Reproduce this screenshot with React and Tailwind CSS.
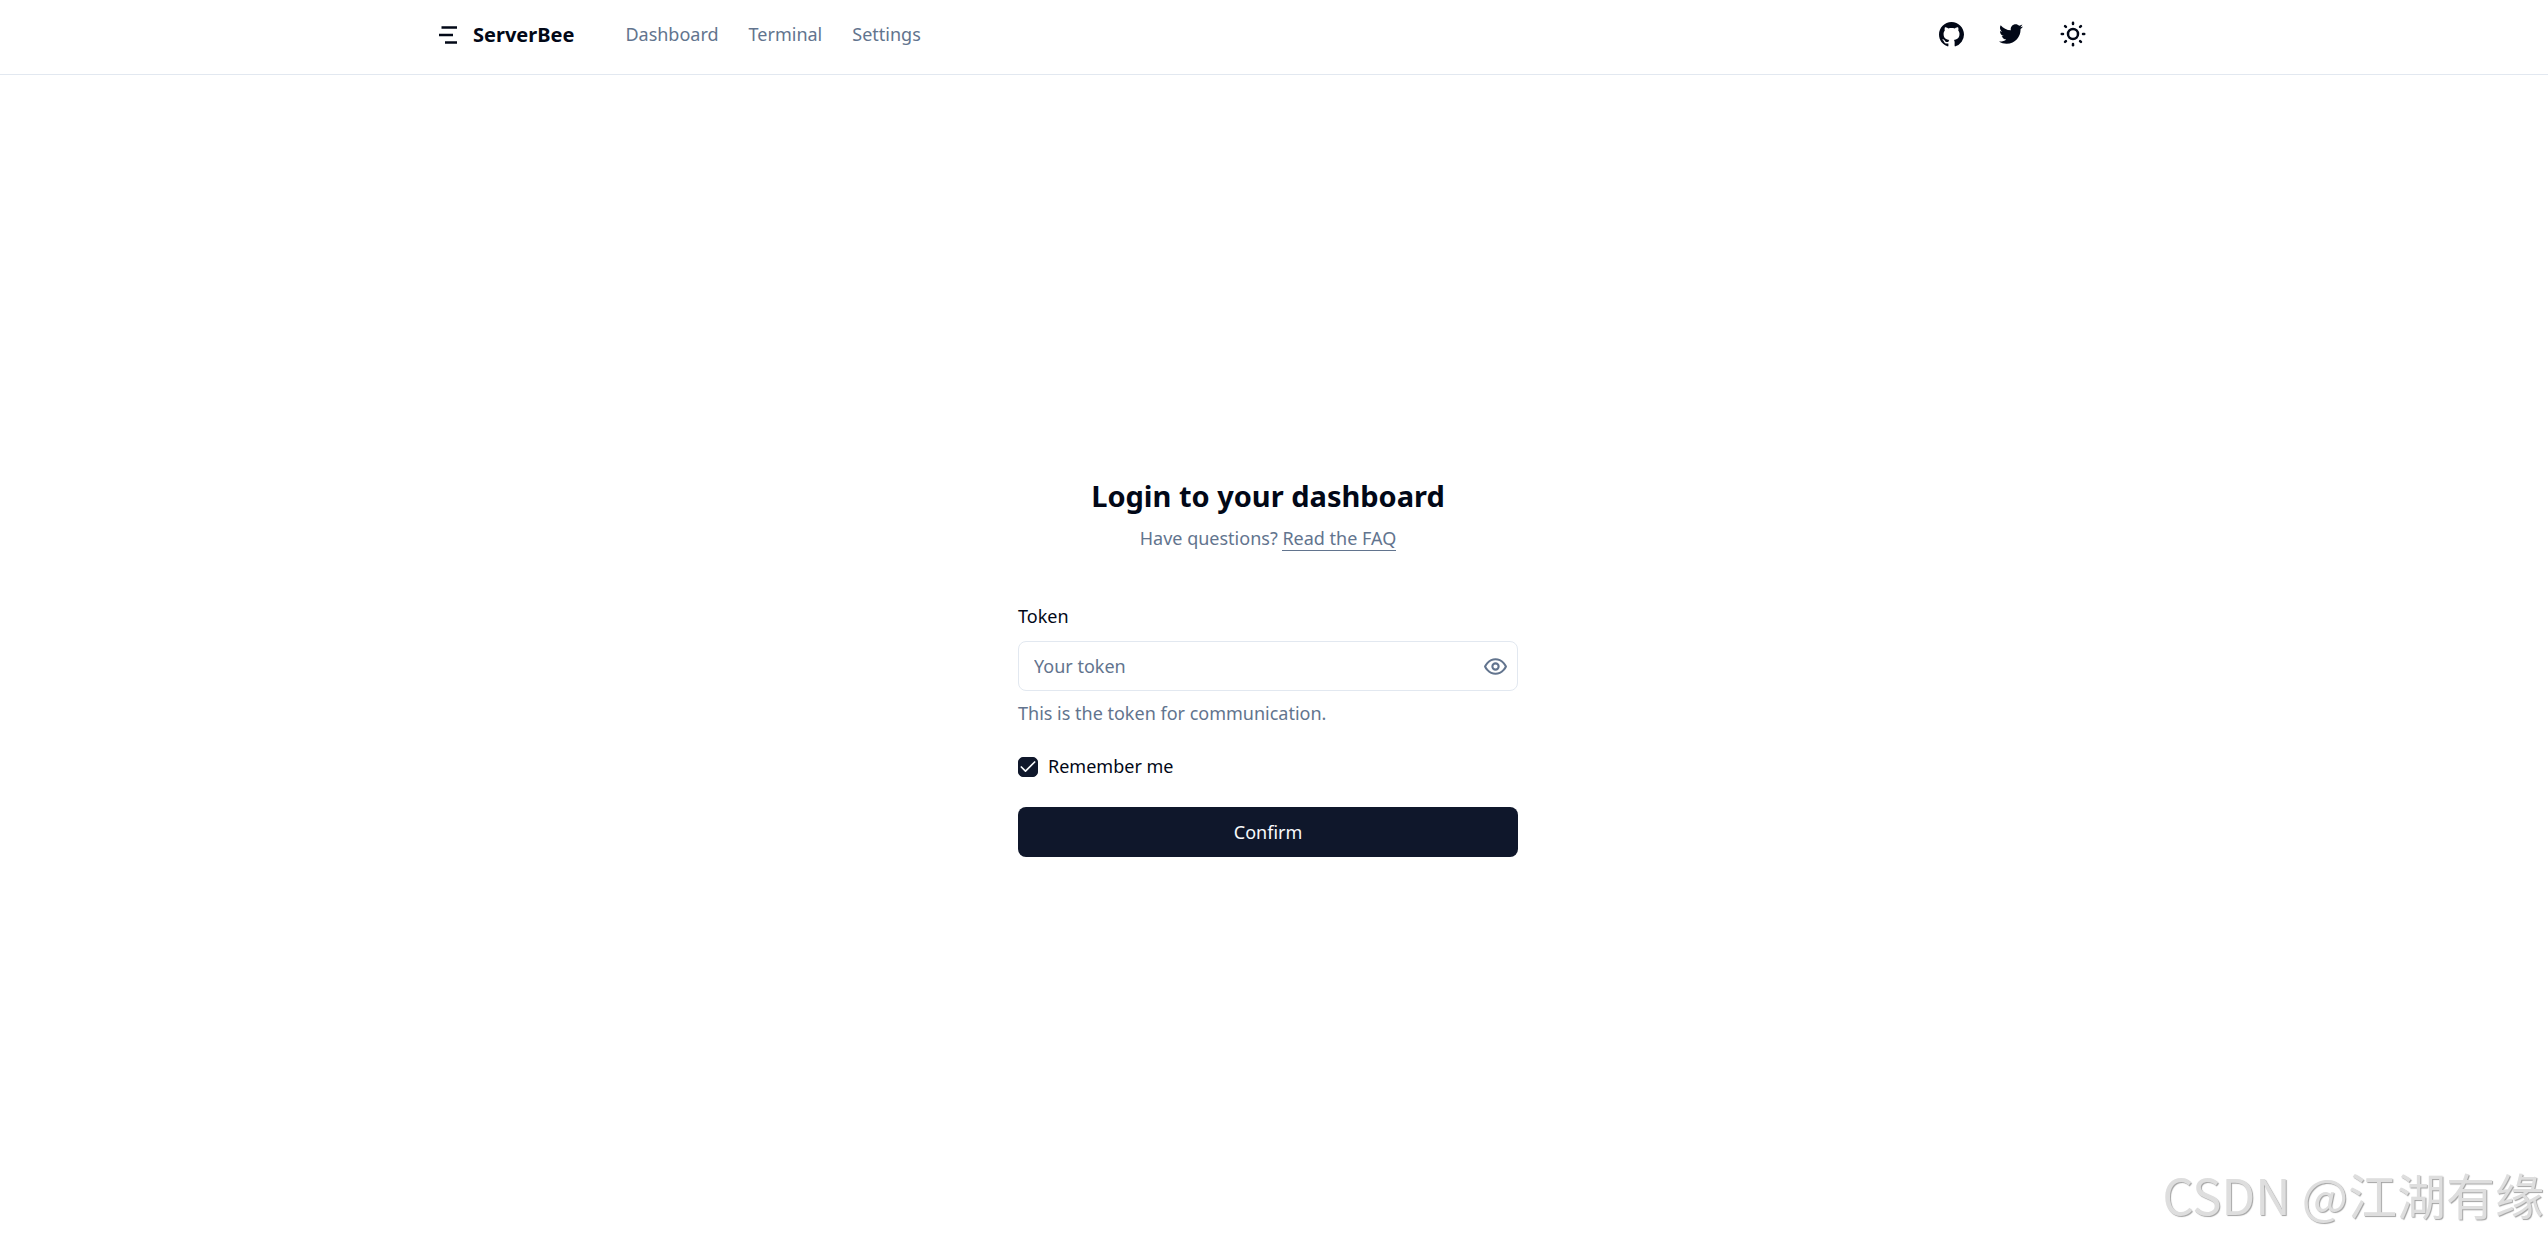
import { useState } from 'react'
import { Check, SunMedium } from 'lucide-react'
import { FaTwitter } from 'react-icons/fa'

const navItems = [
    { title: 'Dashboard', href: '#dashboard' },
    { title: 'Terminal', href: '#terminal' },
    { title: 'Settings', href: '#settings' },
]

function Logo() {
    return (
        <svg className="h-[30px] w-[30px]" viewBox="0 0 30 30" fill="none" stroke="currentColor" strokeWidth="2.5" aria-hidden="true">
            <path d="M8.5 8.5H24M6 16h14M12 23.5h12" />
        </svg>
    )
}

function GithubIcon() {
    return (
        <svg className="h-[25px] w-[25px]" viewBox="0 0 16 16" fill="currentColor" aria-hidden="true">
            <path d="M8 0C3.58 0 0 3.58 0 8c0 3.54 2.29 6.53 5.47 7.59.4.07.55-.17.55-.38 0-.19-.01-.82-.01-1.49-2.01.37-2.53-.49-2.69-.94-.09-.23-.48-.94-.82-1.13-.28-.15-.68-.52-.01-.53.63-.01 1.08.58 1.23.82.72 1.21 1.87.87 2.33.66.07-.52.28-.87.51-1.07-1.78-.2-3.64-.89-3.64-3.95 0-.87.31-1.59.82-2.15-.08-.2-.36-1.02.08-2.12 0 0 .67-.21 2.2.82.64-.18 1.32-.27 2-.27s1.36.09 2 .27c1.53-1.04 2.2-.82 2.2-.82.44 1.1.16 1.92.08 2.12.51.56.82 1.27.82 2.15 0 3.07-1.87 3.75-3.65 3.95.29.25.54.73.54 1.48 0 1.07-.01 1.93-.01 2.2 0 .21.15.46.55.38A8.01 8.01 0 0 0 16 8c0-4.42-3.58-8-8-8Z" />
        </svg>
    )
}

function EyeIcon() {
    return (
        <svg className="h-[25px] w-[25px]" viewBox="0 0 24 24" fill="none" stroke="currentColor" strokeWidth="2" strokeLinecap="round" strokeLinejoin="round" aria-hidden="true">
            <path d="M2 12s3-7 10-7 10 7 10 7-3 7-10 7-10-7-10-7Z" />
            <circle cx="12" cy="12" r="3" />
        </svg>
    )
}

function SiteHeader() {
    return (
        <header className="border-b border-slate-200 pr-3 pb-1.5">
            <div className="mx-auto flex h-[68px] w-full max-w-[1750px] items-center px-10">
                <a href="#home" className="flex items-center gap-[10px] text-[20px] font-bold">
                    <Logo />
                    ServerBee
                </a>
                <nav className="ml-[51px] flex items-center gap-[30px] text-slate-500">
                    {navItems.map((item) => (
                        <a key={item.title} href={item.href}>{item.title}</a>
                    ))}
                </nav>
                <div className="ml-auto flex items-center">
                    <a href="#github" aria-label="GitHub" className="flex w-15 justify-center">
                        <GithubIcon />
                    </a>
                    <a href="#twitter" aria-label="Twitter" className="flex w-15 justify-center">
                        <FaTwitter size={24} />
                    </a>
                    <button type="button" aria-label="Toggle theme" className="ml-0.5 flex w-15 justify-center">
                        <SunMedium size={30} />
                    </button>
                </div>
            </div>
        </header>
    )
}

function LoginForm() {
    const [token, setToken] = useState('')
    const [visible, setVisible] = useState(false)
    const [remember, setRemember] = useState(true)

    return (
        <form className="mt-[53px] flex w-full flex-col" onSubmit={(e) => e.preventDefault()}>
            <label htmlFor="token">Token</label>
            <div className="relative mt-3">
                <input
                    id="token"
                    type={visible ? 'text' : 'password'}
                    placeholder="Your token"
                    value={token}
                    onChange={(e) => setToken(e.target.value)}
                    className="block h-[50px] w-full rounded-lg border border-slate-200 bg-white pr-12 pl-[15px] outline-none placeholder:text-slate-500"
                />
                <button
                    type="button"
                    aria-label="Show token"
                    onClick={() => setVisible(!visible)}
                    className="absolute inset-y-0 right-[10px] flex items-center text-slate-500"
                >
                    <EyeIcon />
                </button>
            </div>
            <p className="mt-[10px] text-slate-500">This is the token for communication.</p>
            <div className="mt-7 flex items-center gap-[10px]">
                <span className="relative flex h-5 w-5">
                    <input
                        id="remember"
                        type="checkbox"
                        checked={remember}
                        onChange={(e) => setRemember(e.target.checked)}
                        className="peer h-5 w-5 appearance-none rounded-[5px] border border-slate-900 checked:bg-slate-900"
                    />
                    <Check size={20} strokeWidth={2} className="pointer-events-none absolute inset-0 hidden text-slate-50 peer-checked:block" />
                </span>
                <label htmlFor="remember">Remember me</label>
            </div>
            <button type="submit" className="mt-7 h-[50px] rounded-lg bg-slate-900 text-slate-50">
                Confirm
            </button>
        </form>
    )
}

export default function App() {
    return (
        <div className="relative flex min-h-screen flex-col bg-white font-['Noto_Sans',sans-serif] text-[18px] leading-[25px] text-[#020817]">
            <SiteHeader />
            <main className="flex flex-1 flex-col items-center justify-center pt-5 pr-3">
                <div className="flex w-full max-w-[500px] flex-col items-center">
                    <h1 className="text-[29px] leading-10 font-bold">Login to your dashboard</h1>
                    <p className="mt-[10px] text-slate-500">
                        Have questions?{' '}
                        <a href="#faq" className="border-b border-slate-500">Read the FAQ</a>
                    </p>
                    <LoginForm />
                </div>
            </main>
            <p className="pointer-events-none absolute right-1 bottom-3 font-['Noto_Sans_CJK_SC',sans-serif] text-[49px] leading-[64px] whitespace-nowrap text-[#dedede] [text-shadow:1px_1px_1px_#a3a3a3]">
                CSDN @江湖有缘
            </p>
        </div>
    )
}
